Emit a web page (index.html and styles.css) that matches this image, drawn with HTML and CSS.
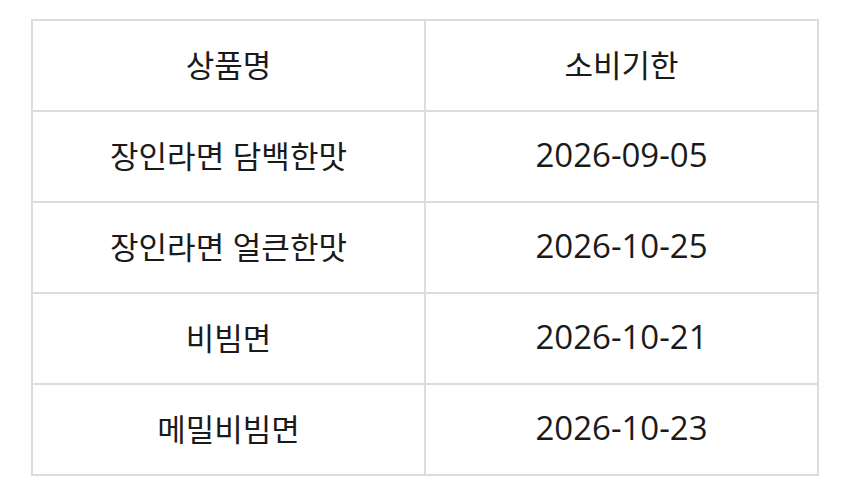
FILE: index.html
```html
<!DOCTYPE html>
<html lang="ko">
<head>
<meta charset="utf-8">
<link rel="stylesheet" href="styles.css">
</head>
<body>
<div class="wrap">
<table class="tbl">
<thead>
<tr><th>상품명</th><th>소비기한</th></tr>
</thead>
<tbody>
<tr><td>장인라면 담백한맛</td><td class="date">2026-09-05</td></tr>
<tr><td>장인라면 얼큰한맛</td><td class="date">2026-10-25</td></tr>
<tr><td>비빔면</td><td class="date">2026-10-21</td></tr>
<tr><td>메밀비빔면</td><td class="date">2026-10-23</td></tr>
</tbody>
</table>
</div>
</body>
</html>
```

FILE: styles.css
```css
html, body {
  margin: 0;
  padding: 0;
  background: #ffffff;
}
.wrap {
  padding: 19px 31px 0 31px;
}
.tbl {
  width: 788px;
  border-collapse: collapse;
  font-family: "Noto Sans CJK KR", "Noto Sans", sans-serif;
  font-size: 31px;
  color: #1a1a1a;
  table-layout: fixed;
}
.tbl th, .tbl td {
  border: 2px solid #dcdcdc;
  height: 85px;
  padding: 0 0 4px 0;
  text-align: center;
  vertical-align: middle;
  font-weight: 400;
}
.tbl td.date {
  font-family: "Open Sans", "Noto Sans", sans-serif;
  font-size: 33px;
}
```
